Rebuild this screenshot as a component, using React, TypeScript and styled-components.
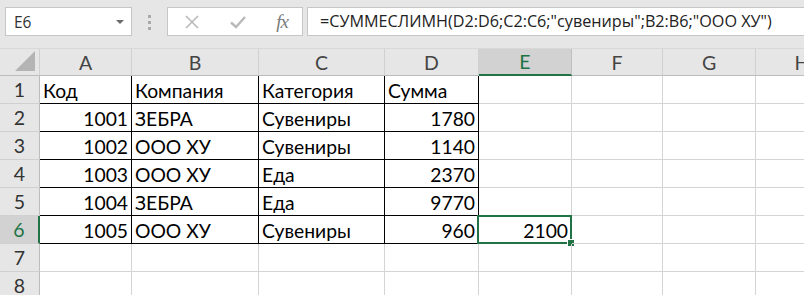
import styled, { createGlobalStyle } from "styled-components";

const GlobalStyle = createGlobalStyle`
    html, body {
        margin: 0;
        padding: 0;
        background: #ffffff;
        overflow: hidden;
    }
`;

const COLS = ["A", "B", "C", "D", "E", "F", "G", "H"];
const WIDTHS = "40px 92px 127px 126px 94px 93px 91px 93px 93px";
const GREEN = "#217346";

type Cell = { text: string; num?: boolean };

const DATA: Cell[][] = [
    [{ text: "Код" }, { text: "Компания" }, { text: "Категория" }, { text: "Сумма" }],
    [{ text: "1001", num: true }, { text: "ЗЕБРА" }, { text: "Сувениры" }, { text: "1780", num: true }],
    [{ text: "1002", num: true }, { text: "ООО ХУ" }, { text: "Сувениры" }, { text: "1140", num: true }],
    [{ text: "1003", num: true }, { text: "ООО ХУ" }, { text: "Еда" }, { text: "2370", num: true }],
    [{ text: "1004", num: true }, { text: "ЗЕБРА" }, { text: "Еда" }, { text: "9770", num: true }],
    [{ text: "1005", num: true }, { text: "ООО ХУ" }, { text: "Сувениры" }, { text: "960", num: true }],
];

const SELECTED_ROW = 6;
const SELECTED_COL = 4; // E

const App = () => {
    const rows = [1, 2, 3, 4, 5, 6, 7, 8];
    return (
        <>
            <GlobalStyle />
            <StyledPage>
                <StyledToolbar>
                    <StyledNameBox>
                        <span>E6</span>
                        <StyledCaret />
                    </StyledNameBox>
                    <StyledGrip>
                        <i />
                        <i />
                        <i />
                    </StyledGrip>
                    <StyledFxBox>
                        <svg width="16" height="16" viewBox="0 0 16 16">
                            <path d="M2 2 L14 14 M14 2 L2 14" stroke="#b9b9b9" strokeWidth="1.6" fill="none" />
                        </svg>
                        <svg width="18" height="16" viewBox="0 0 18 16">
                            <path d="M2 8.5 L7 13 L16 3" stroke="#b9b9b9" strokeWidth="2.4" fill="none" />
                        </svg>
                        <StyledFx>fx</StyledFx>
                    </StyledFxBox>
                    <StyledFormula>=СУММЕСЛИМН(D2:D6;C2:C6;"сувениры";B2:B6;"ООО ХУ")</StyledFormula>
                </StyledToolbar>

                <StyledGrid>
                    <StyledCorner>
                        <svg width="22" height="22" viewBox="0 0 22 22">
                            <path d="M21 1 L21 21 L1 21 Z" fill="#b4b4b4" />
                        </svg>
                    </StyledCorner>
                    {COLS.map((c, i) => (
                        <StyledColHeader key={c} $active={i === SELECTED_COL}>
                            {c}
                        </StyledColHeader>
                    ))}

                    {rows.map((r) => (
                        <RowCells key={r} row={r} />
                    ))}
                </StyledGrid>
            </StyledPage>
        </>
    );
};

const RowCells = ({ row }: { row: number }) => {
    const data = DATA[row - 1];
    return (
        <>
            <StyledRowHeader $active={row === SELECTED_ROW}>{row}</StyledRowHeader>
            {COLS.map((c, i) => {
                const cell = data && i < 4 ? data[i] : undefined;
                const boxed = !!data && i < 4;
                const selected = row === SELECTED_ROW && i === SELECTED_COL;
                return (
                    <StyledCell key={c} $boxed={boxed} $num={!!cell?.num || selected}>
                        {selected ? (
                            <>
                                2100
                                <StyledSelection />
                            </>
                        ) : (
                            cell?.text
                        )}
                    </StyledCell>
                );
            })}
        </>
    );
};

const StyledPage = styled.div`
    width: 804px;
    height: 295px;
    overflow: hidden;
    background: #ffffff;
`;

const StyledToolbar = styled.div`
    display: flex;
    align-items: flex-start;
    height: 49px;
    padding: 7px 0 0 5px;
    box-sizing: border-box;
    background: #e6e6e6;
    border-bottom: 1px solid #d8d8d8;
    font-family: "Open Sans", "Noto Sans", sans-serif;
`;

const StyledNameBox = styled.div`
    position: relative;
    display: flex;
    align-items: center;
    width: 127px;
    height: 29px;
    padding-left: 8px;
    box-sizing: border-box;
    background: #ffffff;
    border: 1px solid #c6c6c6;
    font-size: 15.5px;
    color: #333333;
`;

const StyledCaret = styled.span`
    position: absolute;
    right: 7px;
    top: 12px;
    width: 0;
    height: 0;
    border-left: 4px solid transparent;
    border-right: 4px solid transparent;
    border-top: 4px solid #6a6a6a;
`;

const StyledGrip = styled.div`
    display: flex;
    flex-direction: column;
    gap: 3px;
    margin: 8px 16px 0 16px;

    i {
        display: block;
        width: 3px;
        height: 3px;
        background: #a9a9a9;
    }
`;

const StyledFxBox = styled.div`
    display: flex;
    align-items: center;
    justify-content: space-between;
    width: 136px;
    height: 29px;
    padding: 0 14px 0 16px;
    box-sizing: border-box;
    background: #ffffff;
    border: 1px solid #c6c6c6;
`;

const StyledFx = styled.span`
    font-family: "Liberation Serif", "DejaVu Serif", serif;
    font-style: italic;
    font-size: 19px;
    color: #7a7a7a;
    letter-spacing: -1px;
`;

const StyledFormula = styled.div`
    flex: 1;
    height: 29px;
    margin-left: 4px;
    padding-left: 12px;
    box-sizing: border-box;
    background: #ffffff;
    border: 1px solid #c6c6c6;
    border-right: none;
    font-size: 16.2px;
    line-height: 27px;
    color: #222222;
    white-space: nowrap;
    overflow: hidden;
`;

const StyledGrid = styled.div`
    display: grid;
    grid-template-columns: ${WIDTHS};
    grid-template-rows: 27px repeat(8, 28px);
    font-family: Lato, "Noto Sans", sans-serif;
    font-size: 19.3px;
    color: #000000;
`;

const StyledCorner = styled.div`
    display: flex;
    align-items: flex-end;
    justify-content: flex-end;
    padding: 0 3px 3px 0;
    background: #e6e6e6;
    border-right: 1px solid #d0d0d0;
    border-bottom: 1px solid #bcbcbc;
`;

const StyledColHeader = styled.div<{ $active: boolean }>`
    display: flex;
    align-items: center;
    justify-content: center;
    box-sizing: border-box;
    background: ${(p) => (p.$active ? "#d2d2d2" : "#e6e6e6")};
    color: ${(p) => (p.$active ? GREEN : "#444444")};
    border-right: 1px solid ${(p) => (p.$active ? "#c0c0c0" : "#d0d0d0")};
    border-bottom: ${(p) => (p.$active ? `2px solid ${GREEN}` : "1px solid #bcbcbc")};
    font-size: 19.5px;
`;

const StyledRowHeader = styled.div<{ $active: boolean }>`
    display: flex;
    align-items: center;
    justify-content: center;
    box-sizing: border-box;
    background: ${(p) => (p.$active ? "#d2d2d2" : "#e6e6e6")};
    color: ${(p) => (p.$active ? GREEN : "#333333")};
    border-right: ${(p) => (p.$active ? `2px solid ${GREEN}` : "1px solid #bcbcbc")};
    border-bottom: 1px solid #d0d0d0;
    font-size: 19.5px;
`;

const StyledCell = styled.div<{ $boxed: boolean; $num: boolean }>`
    position: relative;
    display: flex;
    align-items: center;
    justify-content: ${(p) => (p.$num ? "flex-end" : "flex-start")};
    padding: 1px 3px 0 3px;
    box-sizing: border-box;
    white-space: nowrap;
    border-right: 1px solid ${(p) => (p.$boxed ? "#000000" : "#d4d4d4")};
    border-bottom: 1px solid ${(p) => (p.$boxed ? "#000000" : "#d4d4d4")};
`;

const StyledSelection = styled.span`
    position: absolute;
    left: -2px;
    top: -1px;
    right: -1px;
    bottom: -1px;
    border: 2px solid ${GREEN};

    &::after {
        content: "";
        position: absolute;
        right: -5px;
        bottom: -5px;
        width: 6px;
        height: 6px;
        background: ${GREEN};
        border: 1px solid #ffffff;
    }
`;

export default App;
